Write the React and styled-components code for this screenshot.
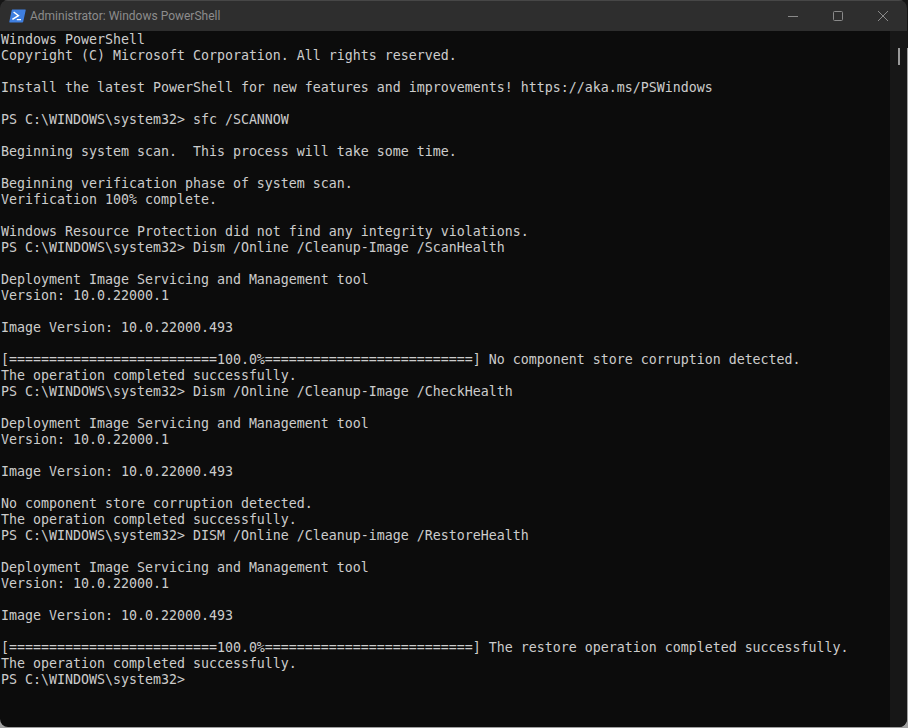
import React from "react";
import styled, { createGlobalStyle } from "styled-components";

const GlobalStyle = createGlobalStyle`
  html, body {
    margin: 0;
    padding: 0;
    height: 728px;
    overflow: hidden;
  }

  /* what shows around the window: dark behind the top, light desktop below */
  body {
    background: linear-gradient(to bottom, #161616 48px, #a0a0a0 48px);
  }
`;

const lines = [
  "Windows PowerShell",
  "Copyright (C) Microsoft Corporation. All rights reserved.",
  "",
  "Install the latest PowerShell for new features and improvements! https://aka.ms/PSWindows",
  "",
  "PS C:\\WINDOWS\\system32> sfc /SCANNOW",
  "",
  "Beginning system scan.  This process will take some time.",
  "",
  "Beginning verification phase of system scan.",
  "Verification 100% complete.",
  "",
  "Windows Resource Protection did not find any integrity violations.",
  "PS C:\\WINDOWS\\system32> Dism /Online /Cleanup-Image /ScanHealth",
  "",
  "Deployment Image Servicing and Management tool",
  "Version: 10.0.22000.1",
  "",
  "Image Version: 10.0.22000.493",
  "",
  "[==========================100.0%==========================] No component store corruption detected.",
  "The operation completed successfully.",
  "PS C:\\WINDOWS\\system32> Dism /Online /Cleanup-Image /CheckHealth",
  "",
  "Deployment Image Servicing and Management tool",
  "Version: 10.0.22000.1",
  "",
  "Image Version: 10.0.22000.493",
  "",
  "No component store corruption detected.",
  "The operation completed successfully.",
  "PS C:\\WINDOWS\\system32> DISM /Online /Cleanup-image /RestoreHealth",
  "",
  "Deployment Image Servicing and Management tool",
  "Version: 10.0.22000.1",
  "",
  "Image Version: 10.0.22000.493",
  "",
  "[==========================100.0%==========================] The restore operation completed successfully.",
  "The operation completed successfully.",
  "PS C:\\WINDOWS\\system32>",
];

const PowerShellIcon = () => (
  <svg width="17" height="14" viewBox="0 0 17 14">
    <path d="M3.4 0.5H16.2Q16.9 0.5 16.7 1.2L14.2 12.8Q14 13.5 13.3 13.5H0.8Q0.1 13.5 0.3 12.8L2.7 1.2Q2.9 0.5 3.4 0.5Z" fill="#3f7fe0" />
    <path d="M4.6 3L9.4 6.6L3.4 10.4" fill="none" stroke="#ffffff" strokeWidth="1.5" />
    <path d="M7.8 10.6H12" fill="none" stroke="#ffffff" strokeWidth="1.3" />
  </svg>
);

const App = () => {
  return (
    <>
      <GlobalStyle />
      <Window>
        <TitleBar>
          <TitleLeft>
            <PowerShellIcon />
            <Title>Administrator: Windows PowerShell</Title>
          </TitleLeft>
          <Controls>
            <ControlButton aria-label="Minimize">
              <svg width="10" height="10" viewBox="0 0 10 10">
                <path d="M0 5.5H10" stroke="#8a8a8a" strokeWidth="1" />
              </svg>
            </ControlButton>
            <ControlButton aria-label="Maximize">
              <svg width="10" height="10" viewBox="0 0 10 10">
                <rect x="0.5" y="0.5" width="9" height="9" rx="1" fill="none" stroke="#8a8a8a" strokeWidth="1" />
              </svg>
            </ControlButton>
            <ControlButton aria-label="Close">
              <svg width="10" height="10" viewBox="0 0 10 10">
                <path d="M0 0L10 10M10 0L0 10" stroke="#8a8a8a" strokeWidth="1" />
              </svg>
            </ControlButton>
          </Controls>
        </TitleBar>
        <Body>
          <Console>
            {lines.map((line, i) => (
              <Line key={i}>{line}</Line>
            ))}
          </Console>
          <ScrollTrack>
            <ScrollThumb />
          </ScrollTrack>
        </Body>
      </Window>
    </>
  );
};

export default App;

const Window = styled.div`
  width: 907px;
  height: 727px;
  display: flex;
  flex-direction: column;
  overflow: hidden;
  background: #0c0c0c;
  border-radius: 8px;
`;

const TitleBar = styled.div`
  height: 31px;
  box-sizing: border-box;
  flex-shrink: 0;
  display: flex;
  align-items: center;
  justify-content: space-between;
  background: #2e2e2e;
  border-top: 1px solid #474747;
`;

const TitleLeft = styled.div`
  display: flex;
  align-items: center;
  gap: 4px;
  padding-left: 9px;
`;

const Title = styled.span`
  font-family: Roboto, "Noto Sans", sans-serif;
  font-size: 12px;
  color: #8c8c8c;
`;

const Controls = styled.div`
  display: flex;
  align-items: center;
  padding-right: 1px;
`;

const ControlButton = styled.div`
  width: 45px;
  height: 30px;
  box-sizing: border-box;
  padding-right: 1px;
  display: flex;
  align-items: center;
  justify-content: center;
`;

const Body = styled.div`
  flex: 1;
  display: flex;
  min-height: 0;
`;

const Console = styled.div`
  flex: 1;
  padding: 1px 0 0 1px;
  font-family: "DejaVu Sans Mono", "Liberation Mono", monospace;
  font-size: 13.29px;
  line-height: 16px;
  color: #cccccc;
`;

const Line = styled.div`
  height: 16px;
  white-space: pre;
`;

const ScrollTrack = styled.div`
  width: 17px;
  flex-shrink: 0;
  position: relative;
  background: #171717;
`;

const ScrollThumb = styled.div`
  position: absolute;
  left: 8px;
  top: 17px;
  width: 2px;
  height: 17px;
  background: #9a9a9a;
`;
